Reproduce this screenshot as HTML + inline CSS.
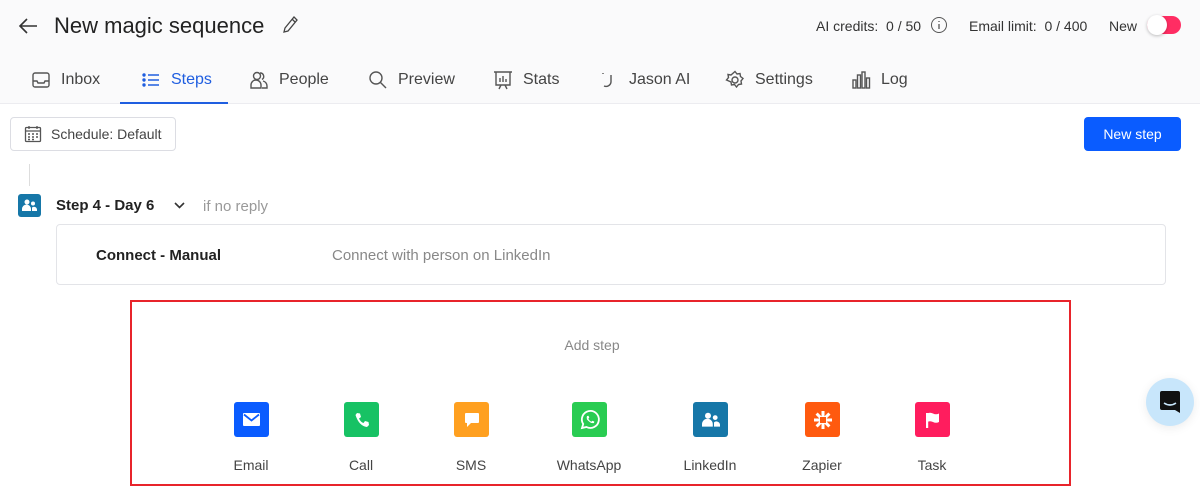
<!DOCTYPE html>
<html><head><meta charset="utf-8"><style>
*{box-sizing:border-box;margin:0;padding:0}
body{width:1200px;height:490px;overflow:hidden;background:#fff;font-family:"Liberation Sans",sans-serif;color:#222;position:relative}
.hdr{position:absolute;left:0;top:0;width:1200px;height:104px;background:#fafafb;border-bottom:1px solid #ececf0}
.abs{position:absolute;white-space:nowrap}
.tab{position:absolute;top:69px;font-size:16px;color:#444;display:flex;align-items:center;gap:10px;height:22px}
.tab svg{width:20px;height:20px;fill:none;stroke:#555;stroke-width:1.4}
.ic{position:absolute;top:402px;width:35px;height:35px;border-radius:3px;display:flex;align-items:center;justify-content:center}
.lb{position:absolute;top:457px;font-size:14px;color:#444;width:120px;text-align:center}
</style></head><body>
<div class="hdr"></div>
<svg class="abs" style="left:17px;top:16px" width="22" height="20" viewBox="0 0 22 20"><path d="M20 10H3M10 3L3 10l7 7" stroke="#333" stroke-width="1.6" fill="none"/></svg>
<div class="abs" style="left:54px;top:13px;font-size:22px;color:#222">New magic sequence</div>
<svg class="abs" style="left:282px;top:15px" width="18" height="20" viewBox="0 0 18 20"><path d="M12 2l3 3-9 11-4 1 1-4z M10 4l3 3" stroke="#444" stroke-width="1.3" fill="none"/></svg>
<div class="abs" style="left:816px;top:18px;font-size:14px;color:#333">AI credits:&nbsp; 0 / 50</div>
<svg class="abs" style="left:930px;top:16px" width="18" height="18" viewBox="0 0 18 18"><circle cx="9" cy="9" r="7.5" stroke="#555" fill="none"/><path d="M9 8v5M9 5v1" stroke="#555" stroke-width="1.3"/></svg>
<div class="abs" style="left:969px;top:18px;font-size:14px;color:#333">Email limit:&nbsp; 0 / 400</div>
<div class="abs" style="left:1109px;top:18px;font-size:14px;color:#333">New</div>
<div class="abs" style="left:1147px;top:16px;width:34px;height:18px;border-radius:9px;background:#ff2d63"></div>
<div class="abs" style="left:1147px;top:15px;width:20px;height:20px;border-radius:50%;background:#fff;box-shadow:0 1px 3px rgba(0,0,0,.25)"></div>

<div class="tab" style="left:31px"><svg viewBox="0 0 20 20"><rect x="2" y="3" width="16" height="14" rx="2"/><path d="M2 11h4l1 2h6l1-2h4"/></svg>Inbox</div>
<div class="tab" style="left:141px;color:#1f5ee0"><svg viewBox="0 0 20 20" style="stroke:#1f5ee0"><path d="M7 5h11M7 10h11M7 15h11"/><circle cx="3" cy="5" r="1" fill="#1f5ee0"/><circle cx="3" cy="10" r="1" fill="#1f5ee0"/><circle cx="3" cy="15" r="1" fill="#1f5ee0"/></svg>Steps</div>
<div class="abs" style="left:120px;top:102px;width:108px;height:2px;background:#1f5ee0"></div>
<div class="tab" style="left:249px"><svg viewBox="0 0 20 20"><circle cx="8" cy="6" r="3.5"/><path d="M2 18v-3a5 5 0 0 1 10 0v3z"/><path d="M11 3a3.5 3.5 0 0 1 2 6.5M14 11a5 5 0 0 1 4 5v2h-5"/></svg>People</div>
<div class="tab" style="left:368px"><svg viewBox="0 0 20 20"><circle cx="8" cy="8" r="6"/><path d="M12.5 12.5L18 18"/></svg>Preview</div>
<div class="tab" style="left:493px"><svg viewBox="0 0 20 20"><path d="M1 2h18M3 2v13h14V2M7 12V8M10 12V6M13 12V9M8 15l-2 4M12 15l2 4"/></svg>Stats</div>
<div class="tab" style="left:599px"><svg viewBox="0 0 20 20"><path d="M12 5v7a5 5 0 0 1-7 4M4 3v1"/></svg>Jason AI</div>
<div class="tab" style="left:725px"><svg viewBox="0 0 20 20"><circle cx="10" cy="10" r="3"/><path d="M10 1.5l2 2.5 3-.5.5 3 2.5 2-2 2.5.5 3-3 .5-2 2.5-2-2.5-3 .5-.5-3L1.5 10l2-2.5-.5-3 3 .5z"/></svg>Settings</div>
<div class="tab" style="left:851px"><svg viewBox="0 0 20 20"><rect x="2" y="10" width="3" height="8"/><rect x="6.5" y="5" width="3" height="13"/><rect x="11" y="2" width="3" height="16"/><rect x="15.5" y="8" width="3" height="10"/></svg>Log</div>

<div class="abs" style="left:10px;top:117px;width:166px;height:34px;border:1px solid #dcdde3;border-radius:4px;background:#fff"></div>
<svg class="abs" style="left:24px;top:125px" width="18" height="18" viewBox="0 0 18 18"><rect x="1.5" y="2.5" width="15" height="14" rx="1" stroke="#555" fill="none" stroke-width="1.3"/><path d="M1.5 6h15M5 1v3M13 1v3" stroke="#555" stroke-width="1.3"/><path d="M4 9h2M8 9h2M12 9h2M4 12h2M8 12h2M12 12h2M4 14.5h2M8 14.5h2" stroke="#555" stroke-width="1.4"/></svg>
<div class="abs" style="left:51px;top:126px;font-size:14px;color:#444">Schedule: Default</div>
<div class="abs" style="left:1084px;top:117px;width:97px;height:34px;border-radius:4px;background:#0a5cff;color:#fff;font-size:14px;text-align:center;line-height:34px">New step</div>

<div class="abs" style="left:29px;top:164px;width:1px;height:22px;background:#ddd"></div>
<div class="abs" style="left:18px;top:194px;width:23px;height:23px;border-radius:3px;background:#1677a8;display:flex;align-items:center;justify-content:center"><svg width="15" height="13" viewBox="0 0 15 13"><circle cx="5" cy="3" r="2.5" fill="#fff"/><path d="M0 12v-2a4 4 0 0 1 9 0v2z" fill="#fff"/><circle cx="11" cy="4.5" r="2" fill="#fff"/><path d="M10 12V8.5a3 3 0 0 1 5 2V12z" fill="#fff"/></svg></div>
<div class="abs" style="left:56px;top:197px;font-size:15px;color:#222;font-weight:bold">Step 4 - Day 6</div>
<svg class="abs" style="left:173px;top:201px" width="13" height="9" viewBox="0 0 13 9"><path d="M2 2l4.5 4.5L11 2" stroke="#333" stroke-width="1.6" fill="none"/></svg>
<div class="abs" style="left:203px;top:198px;font-size:15px;color:#999">if no reply</div>

<div class="abs" style="left:56px;top:224px;width:1110px;height:61px;border:1px solid #e3e4e8;border-radius:4px;background:#fff"></div>
<div class="abs" style="left:96px;top:247px;font-size:15px;color:#222;font-weight:bold">Connect - Manual</div>
<div class="abs" style="left:332px;top:247px;font-size:15px;color:#888">Connect with person on LinkedIn</div>

<div class="abs" style="left:130px;top:300px;width:941px;height:186px;border:2px solid #e8242b"></div>
<div class="abs" style="left:0;width:1184px;text-align:center;top:337px;font-size:14px;color:#888">Add step</div>

<div class="ic" style="left:234px;background:#0a5cff"><svg width="17" height="13" viewBox="0 0 17 13"><rect x="0" y="0" width="17" height="13" rx="1" fill="#fff"/><path d="M1 1.5l7.5 6 7.5-6" stroke="#0a5cff" stroke-width="1.8" fill="none"/></svg></div>
<div class="ic" style="left:344px;background:#17c264"><svg width="16" height="16" viewBox="0 0 16 16"><path d="M3 1l3 .5 1 3.5-2 1.5q1.5 3.5 4.5 4.5L11 9l3.5 1 .5 3-2 2Q5 14 1.5 3z" fill="#fff"/></svg></div>
<div class="ic" style="left:454px;background:#ffa020"><svg width="16" height="16" viewBox="0 0 16 16"><path d="M2 1h12a1 1 0 0 1 1 1v8a1 1 0 0 1-1 1H7l-4 4v-4H2a1 1 0 0 1-1-1V2a1 1 0 0 1 1-1z" fill="#fff"/></svg></div>
<div class="ic" style="left:572px;background:#29cc52"><svg width="22" height="22" viewBox="0 0 22 22"><path d="M3 19l1.2-4A8.5 8.5 0 1 1 7.5 18z" stroke="#fff" stroke-width="1.8" fill="none"/><path d="M8 7l1.5-.3.8 2-1 1q1 2 3 3l1-1 2 .8-.3 1.5Q12 15 8 10.5q-.7-2 0-3.5z" fill="#fff"/></svg></div>
<div class="ic" style="left:693px;background:#1677a8"><svg width="18" height="16" viewBox="0 0 15 13"><circle cx="5" cy="3" r="2.5" fill="#fff"/><path d="M0 12v-2a4 4 0 0 1 9 0v2z" fill="#fff"/><circle cx="11" cy="4.5" r="2" fill="#fff"/><path d="M10 12V8.5a3 3 0 0 1 5 2V12z" fill="#fff"/></svg></div>
<div class="ic" style="left:805px;background:#ff5a0f"><svg width="20" height="20" viewBox="0 0 20 20"><g stroke="#fff" stroke-width="3"><path d="M10 1v18M1 10h18M3.6 3.6l12.8 12.8M16.4 3.6L3.6 16.4"/></g><rect x="7" y="7" width="6" height="6" fill="#ff5a0f"/></svg></div>
<div class="ic" style="left:915px;background:#ff1d5e"><svg width="14" height="16" viewBox="0 0 14 16"><path d="M1 1v15" stroke="#fff" stroke-width="2.4"/><path d="M1 1.5q3-1.5 6 0t6 0V10q-3 1.5-6 0t-6 0z" fill="#fff"/></svg></div>

<div class="lb" style="left:191px">Email</div>
<div class="lb" style="left:301px">Call</div>
<div class="lb" style="left:411px">SMS</div>
<div class="lb" style="left:529px">WhatsApp</div>
<div class="lb" style="left:650px">LinkedIn</div>
<div class="lb" style="left:762px">Zapier</div>
<div class="lb" style="left:872px">Task</div>

<div class="abs" style="left:1146px;top:378px;width:48px;height:48px;border-radius:50%;background:#c8e6fb;box-shadow:0 2px 10px rgba(0,0,0,.08)"></div>
<svg class="abs" style="left:1159px;top:390px" width="22" height="24" viewBox="0 0 22 24"><path d="M3 1h16a2 2 0 0 1 2 2v20l-5-3H3a2 2 0 0 1-2-2V3a2 2 0 0 1 2-2z" fill="#111"/><path d="M5 13q6 4 12 0" stroke="#c8e6fb" stroke-width="1.6" fill="none"/></svg>
</body></html>
